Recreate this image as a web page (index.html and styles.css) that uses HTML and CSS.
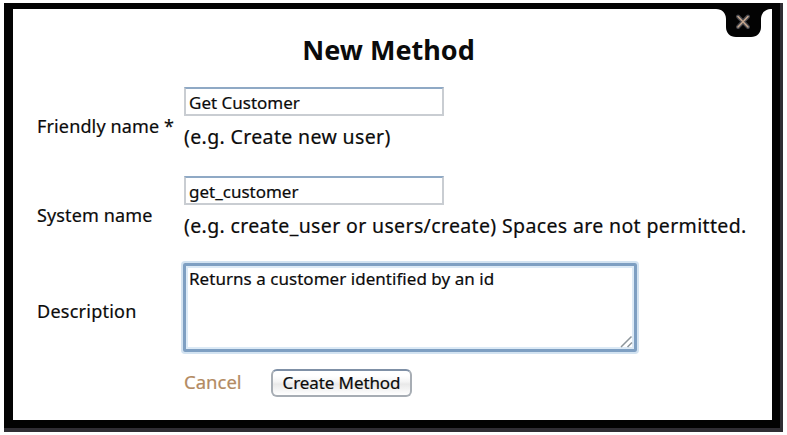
FILE: index.html
```html
<!DOCTYPE html>
<html lang="en">
<head>
<meta charset="utf-8">
<title>New Method</title>
<link rel="stylesheet" href="styles.css">
</head>
<body>
<main class="frame">
  <form class="dialog">
    <h1 class="title">New Method</h1>
    <div class="row name-row">
      <label class="label">Friendly name *</label>
      <div class="field">
        <div class="input">Get Customer</div>
        <div class="hint">(e.g. Create new user)</div>
      </div>
    </div>
    <div class="row system-row">
      <label class="label">System name</label>
      <div class="field">
        <div class="input">get_customer</div>
        <div class="hint">(e.g. create_user or users/create) Spaces are not permitted.</div>
      </div>
    </div>
    <div class="row description-row">
      <label class="label description">Description</label>
      <div class="textarea">Returns a customer identified by an id
        <svg class="grip" width="13" height="13" viewBox="0 0 13 13"><path d="M1 12 11.5 1.5M7.5 12 12 7.5" fill="none" stroke="#8c959b" stroke-width="1.5"/></svg>
      </div>
    </div>
    <div class="actions">
      <a class="cancel">Cancel</a>
      <button class="create" type="button">Create Method</button>
    </div>
  </form>
  <svg class="close" width="56" height="29" viewBox="0 0 56 29"><path d="M0 0H56C49 0 45 4 45 10V18C45 24 41 28 35 28H20C14 28 10 24 10 18V10C10 4 6 0 0 0Z" fill="#030303"/><path d="M22 7.5 32 18M32 7.5 22 18" fill="none" stroke="#46474d" stroke-width="4" stroke-linecap="round"/><path d="M22 7.5 32 18M32 7.5 22 18" fill="none" stroke="#c4a58c" stroke-width="1.6" stroke-linecap="round"/></svg>
</main>
</body>
</html>
```
FILE: styles.css
```css
* { box-sizing: border-box; }
body { margin: 0; padding: 3px 4px; background: #fff; color: #0b0b0b; font-family: "Noto Sans", "Open Sans", sans-serif; font-size: 18px; -webkit-text-stroke: 0.2px; }
.frame { position: relative; width: 779px; height: 429px; padding: 6px 8px 8px 9px; background: #030303; border: solid #302e34; border-width: 0 3px 4px 0; }
.dialog { width: 759px; height: 411px; background: #fff; padding: 22px 24px 0; white-space: nowrap; }
.title { margin: 0; height: 56px; padding-right: 8px; text-align: center; font-size: 27px; line-height: 38px; font-weight: 700; -webkit-text-stroke: 0; }
.row { display: grid; grid-template-columns: 147px 1fr; }
.name-row, .system-row { height: 89px; }
.label { font-size: 18px; line-height: 24px; padding-top: 27px; letter-spacing: 0.14px; }
.input { width: 260px; height: 29px; border: 2px solid #c9cdd2; border-top-color: #8fa9c5; padding: 2px 3px; line-height: 23px; font-size: 17px; }
.hint { margin-top: 8px; line-height: 26px; font-size: 19.5px; letter-spacing: 0.36px; }
.description-row { height: 101px; }
.description { padding-top: 34px; letter-spacing: 0.25px; }
.textarea { position: relative; margin: -2px 0 0 -1px; width: 454px; height: 89px; border: 3px solid #7e9fc2; border-radius: 2px; box-shadow: 0 0 0 2px #d3e3f1, inset 0 0 0 2px #dceaf6; padding: 1px 3px; font-size: 17px; line-height: 23px; letter-spacing: 0.04px; }
.grip { position: absolute; right: 1px; bottom: 1px; }
.actions { display: flex; align-items: flex-start; padding: 3px 0 0 147px; }
.cancel { width: 87px; color: #b38a62; font-size: 18.5px; line-height: 25px; }
.create { width: 141px; height: 28px; padding: 0; border: 2px solid #a7adb4; border-top-color: #7f90a6; border-radius: 6px; background: linear-gradient(#fff 20%, #f4f4f4 45%, #e9e9e9 55%, #fff); color: #0b0b0b; font: 17px/24px "Noto Sans", sans-serif; letter-spacing: -0.1px; -webkit-text-stroke: 0.2px; }
.close { position: absolute; left: 712px; top: 6px; }
```
